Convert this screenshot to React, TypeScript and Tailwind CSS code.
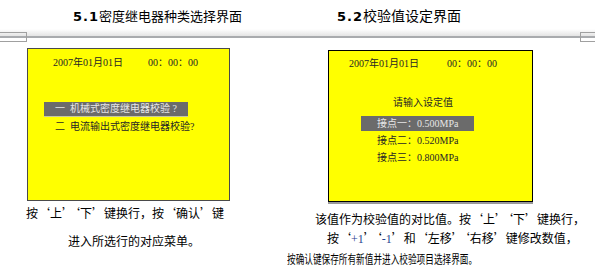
export default function App() {
  const lcd = { fontFamily: '"Liberation Serif", "Noto Sans CJK SC", serif' }

  return (
    <div
      className="relative w-[595px] h-[273px] overflow-hidden bg-white text-black"
      style={{ fontFamily: '"Noto Sans CJK SC", "Liberation Sans", sans-serif' }}
    >
      {/* titles */}
      <div className="flex h-[29px] items-end pb-[4px] text-[13px] leading-[16px]">
        <div className="w-[337px] pl-[73px]">
          <span className="font-bold tracking-[1px]" style={{ fontFamily: '"DejaVu Sans", sans-serif' }}>5.1</span>
          密度继电器种类选择界面
        </div>
        <div className="text-[14px]">
          <span className="font-bold tracking-[1px] text-[13px]" style={{ fontFamily: '"DejaVu Sans", sans-serif' }}>5.2</span>
          校验值设定界面
        </div>
      </div>
      <div className="h-[7px] bg-gradient-to-b from-white to-[#e4e4e4]" />
      <div className="h-[2px] bg-[#a9abae]" />

      {/* line end marks */}
      <div className="absolute left-0 top-[32px] w-[27px] h-[10px] border border-l-0 border-[#a0a0a0]" />
      <div className="absolute left-[580px] top-[32px] w-[16px] h-[10px] border border-r-0 border-[#a0a0a0]" />

      {/* screens */}
      <div className="flex mt-[10px]">
        <div className="ml-[27px] w-[203px] h-[153px] border border-[#4a4a4a] bg-[#ffff00] text-[10px] leading-[12px] text-[#262626]" style={lcd}>
          <div className="flex pt-[8px] pl-[25px]">
            <span className="w-[95px]">2007年01月01日</span>
            <span>00：00：00</span>
          </div>
          <div className="mt-[33px] ml-[16px] w-[144px] h-[15px] flex items-center pl-[11px] bg-[#6b6b6b] text-[#e6e6e6] border-b border-[#c8c8a0]">
            一&nbsp; 机械式密度继电器校验 ?
          </div>
          <div className="mt-[4px] pl-[27px]">二&nbsp; 电流输出式密度继电器校验?</div>
        </div>

        <div className="ml-[98px] mt-[2px] w-[205px] h-[152px] border border-black bg-[#ffff00] text-[10px] leading-[12px] text-[#262626] shadow-[0_2px_0_#9a9a9a]" style={lcd}>
          <div className="flex pt-[7px] pl-[20px]">
            <span className="w-[98px]">2007年01月01日</span>
            <span>00：00：00</span>
          </div>
          <div className="mt-[27px] pl-[64px]">请输入设定值</div>
          <div className="mt-[7px] ml-[32px] w-[113px] h-[15px] flex items-center pl-[16px] bg-[#6b6b6b] text-[#e6e6e6]">
            接点一：0.500MPa
          </div>
          <div className="mt-[4px] pl-[48px]">接点二：0.520MPa</div>
          <div className="mt-[5px] pl-[48px]">接点三：0.800MPa</div>
        </div>
      </div>

      {/* captions */}
      <div className="flex text-[12px] leading-[14px]">
        <div className="w-[287px] shrink-0">
          <div className="mt-[4px] pl-[26px]">按‘上’‘下’键换行，按‘确认’键</div>
          <div className="mt-[14px] pl-[68px]">进入所选行的对应菜单。</div>
        </div>
        <div className="flex-1">
          <div className="mt-[10px] pl-[28px]">该值作为校验值的对比值。按‘上’‘下’键换行，</div>
          <div className="mt-[5px] pl-[40px]">
            按‘<span className="text-[#1f3f8f]" style={lcd}>+1</span>’‘<span className="text-[#1f3f8f]" style={lcd}>-1</span>’和‘左移’‘右移’键修改数值，
          </div>
          <div className="mt-[6px] whitespace-nowrap origin-left scale-x-[0.72]">按确认键保存所有新值并进入校验项目选择界面。</div>
        </div>
      </div>
    </div>
  )
}
